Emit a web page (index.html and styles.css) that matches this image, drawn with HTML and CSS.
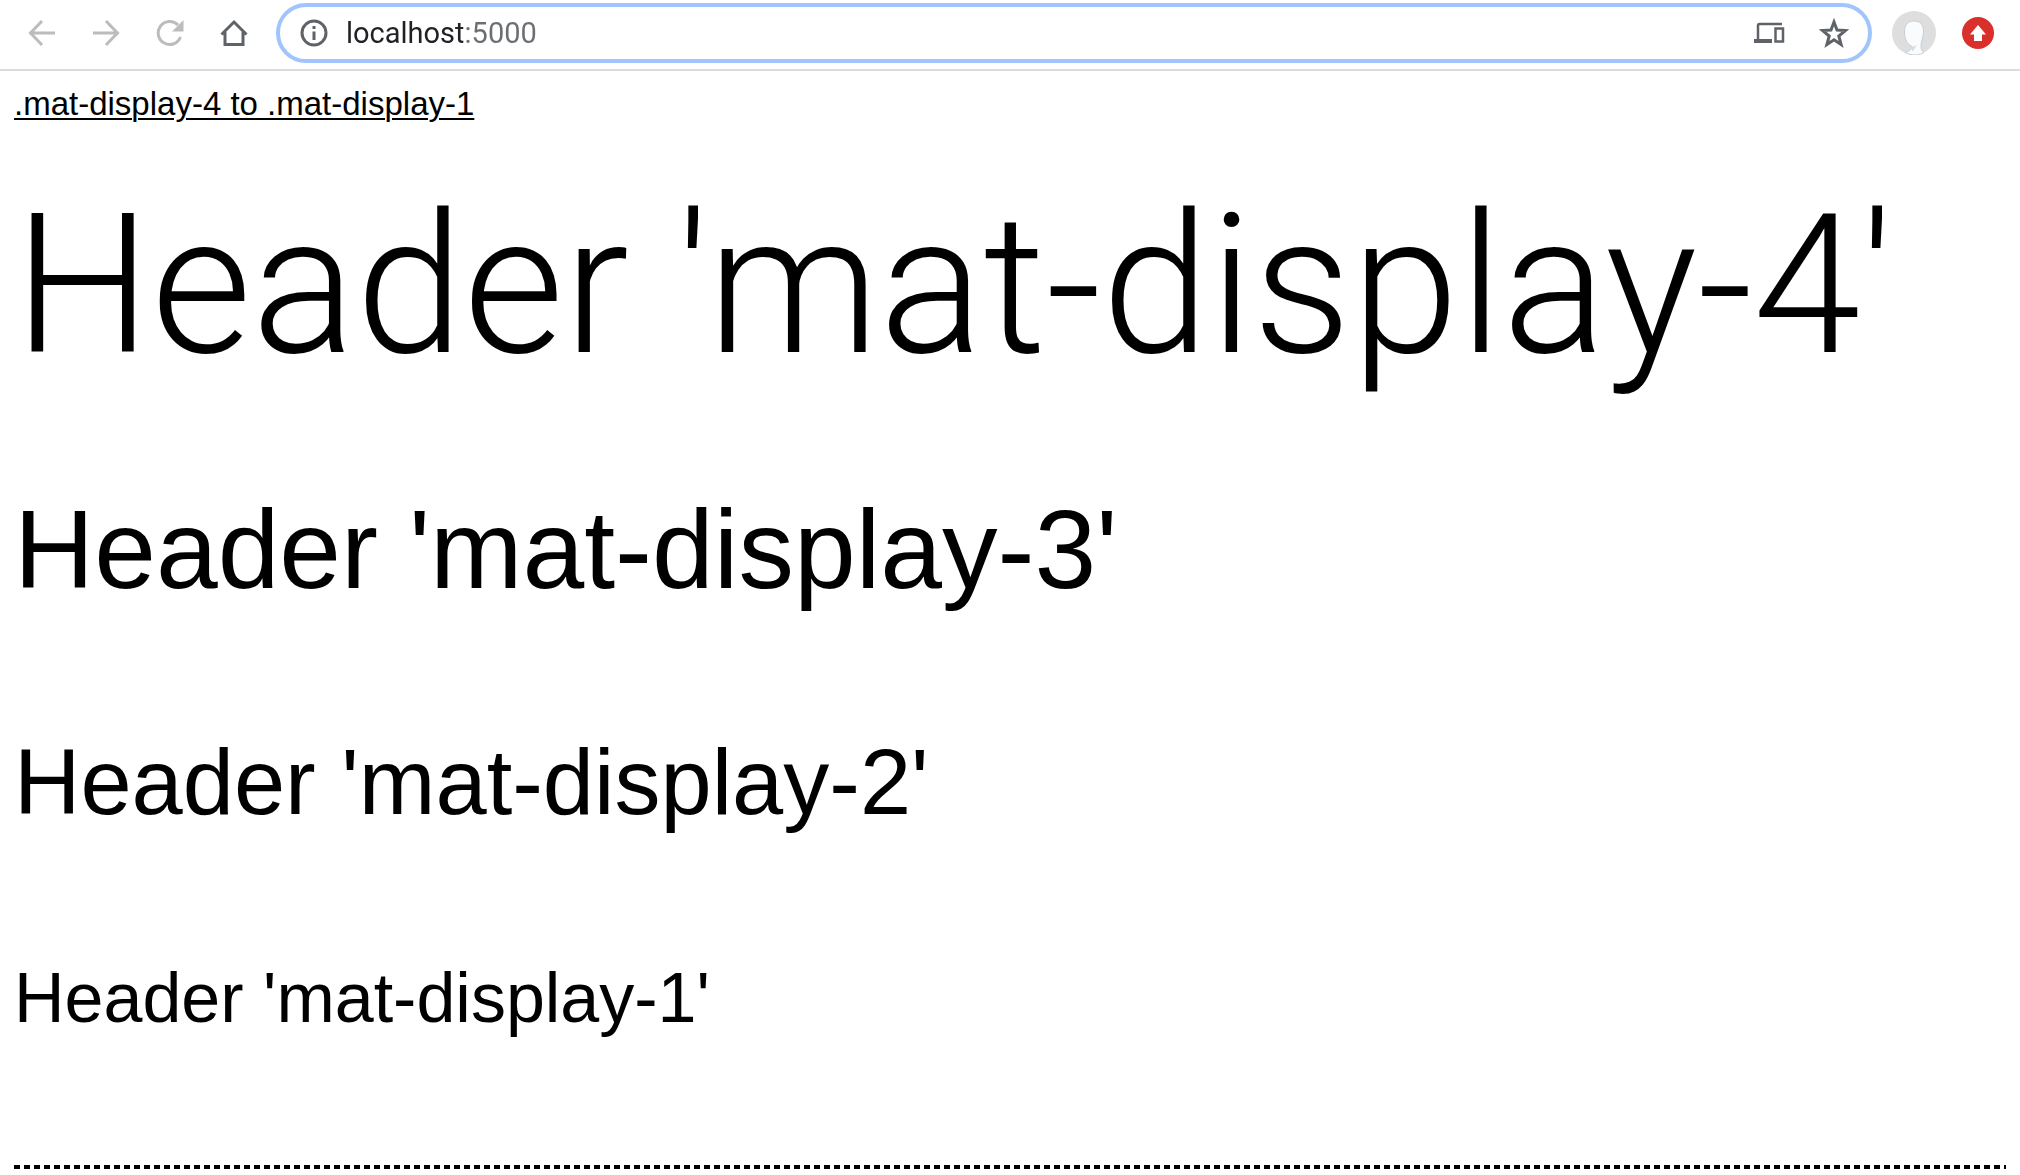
FILE: index.html
```html
<!DOCTYPE html>
<html lang="en">
<head>
  <meta charset="utf-8">
  <meta name="viewport" content="width=device-width, initial-scale=1">
  <title>Typography</title>
  <link rel="stylesheet" href="styles.css">
</head>
<body>
  <header class="toolbar">
    <nav class="nav" aria-label="Browser">
      <button class="icon-button muted" type="button" aria-label="Back">
        <svg width="28" height="28" viewBox="0 0 28 28" fill="none" stroke="currentColor" stroke-width="3"><path d="M27 14H3M14 2 2.500 14 14 26"/></svg>
      </button>
      <button class="icon-button muted" type="button" aria-label="Forward">
        <svg width="28" height="28" viewBox="0 0 28 28" fill="none" stroke="currentColor" stroke-width="3"><path d="M1 14h24M14 2l11.500 12L14 26"/></svg>
      </button>
      <button class="icon-button muted" type="button" aria-label="Reload">
        <svg width="28" height="28" viewBox="0 0 28 28" fill="none"><path d="M24.500 18A11.500 11.500 0 1 1 22 6" stroke="currentColor" stroke-width="3"/><path d="M27.500 1v11.500H16z" fill="currentColor"/></svg>
      </button>
      <button class="icon-button" type="button" aria-label="Home">
        <svg width="28" height="28" viewBox="0 0 28 28" fill="none" stroke="currentColor" stroke-width="3"><path d="M1.500 15.500 14 3l12.500 12.500M5 13v12.500h18V13"/></svg>
      </button>
    </nav>
    <form class="address">
      <svg class="info" width="28" height="28" viewBox="0 0 28 28" fill="none" stroke="currentColor" stroke-width="3" aria-hidden="true"><circle cx="14" cy="14" r="12"/><path d="M14 12.500V21M14 7v3"/></svg>
      <input class="url" type="text" aria-label="Address" value="localhost:5000">
      <button class="icon-button" type="button" aria-label="Send to your devices">
        <svg width="32" height="28" viewBox="0 0 32 28" fill="none" stroke="currentColor"><path d="M29 5H6.500Q5 5 5 6.500V21" stroke-width="2.500"/><path d="M1 22h18" stroke-width="4"/><rect x="22.500" y="9.500" width="7.500" height="13" stroke-width="2.500"/></svg>
      </button>
      <button class="icon-button" type="button" aria-label="Bookmark">
        <svg width="30" height="30" viewBox="0 0 30 30" fill="none" stroke="currentColor" stroke-width="3"><path d="M15 4l3 8 8.500.500-6.700 5.500 2.300 8.500-7.100-4.700-7.100 4.700 2.300-8.500L3.500 12.500 12 12z"/></svg>
      </button>
    </form>
    <button class="icon-button" type="button" aria-label="Profile">
      <svg width="44" height="44" viewBox="0 0 44 44"><circle cx="22" cy="22" r="22" fill="#dedede"/><path d="M13 41.500c4-1 7-3 6.500-6.500-5-2-7-8-7-14 0-7 3-11 9.500-11s9.500 4 9.500 10c0 6-2.500 10-2.500 15 0 3.500 1 5.500 3 6.500-5 3-13 3.500-19 0z" fill="#fafbfc" stroke="#c3d0da"/><path d="M19.500 35c2 1 3.500.500 5.500-1.500-2 3-2.500 5-5 7z" fill="#d3dde4"/></svg>
    </button>
    <button class="icon-button" type="button" aria-label="Update">
      <svg width="32" height="32" viewBox="0 0 32 32"><circle cx="16" cy="16" r="16" fill="#d9302c"/><path d="M16 8l8 9.500h-4V24h-8v-6.500H8z" fill="#fff"/></svg>
    </button>
  </header>
  <main class="page">
    <p class="caption">.mat-display-4 to .mat-display-1</p>
    <h1 class="mat-display-4">Header 'mat-display-4'</h1>
    <h1 class="mat-display-3">Header 'mat-display-3'</h1>
    <h1 class="mat-display-2">Header 'mat-display-2'</h1>
    <h1 class="mat-display-1">Header 'mat-display-1'</h1>
    <hr class="divider">
  </main>
</body>
</html>
```
FILE: styles.css
```css
* {
  box-sizing: border-box;
}

body {
  margin: 0;
  background: #fff;
  color: #000;
  font-family: "Liberation Sans", Arial, sans-serif;
}

.toolbar {
  display: flex;
  align-items: center;
  gap: 26px;
  padding: 3px 26px 6px 28px;
  border-bottom: 2px solid #dadce0;
}

.nav {
  display: flex;
  gap: 36px;
  margin-right: 2px;
}

.icon-button {
  display: flex;
  flex: none;
  padding: 0;
  border: 0;
  background: none;
  color: #5f6368;
}

.muted {
  color: #babcbe;
}

.address {
  display: flex;
  flex: 1;
  align-items: center;
  gap: 34px;
  height: 60px;
  min-width: 0;
  margin-right: -6px;
  padding: 0 19px 0 20px;
  border: 4px solid #a1c4fc;
  border-radius: 30px;
  color: #5f6368;
}

.info {
  flex: none;
  margin-right: -16px;
}

.url {
  flex: 1;
  min-width: 0;
  padding: 0;
  border: 0;
  outline: 0;
  background: linear-gradient(90deg, #202124 117px, #6b6e72 117px);
  background-clip: text;
  color: transparent;
  font: 29px/36px Roboto, sans-serif;
}

.page {
  padding: 13px 14px 0;
}

.caption {
  margin: 0 0 50px;
  font-size: 33px;
  line-height: 40px;
  text-decoration: underline;
  text-decoration-thickness: 2px;
  text-underline-offset: 3px;
}

.mat-display-4,
.mat-display-3,
.mat-display-2,
.mat-display-1 {
  margin: 0 0 128px;
  font-weight: 400;
  white-space: nowrap;
}

.mat-display-4 {
  margin-bottom: 96px;
  font: 300 194px/224px Roboto, sans-serif;
}

.mat-display-3 {
  font-size: 111px;
  line-height: 112px;
}

.mat-display-2 {
  font-size: 92px;
  line-height: 96px;
}

.mat-display-1 {
  margin-bottom: 127px;
  font-size: 70px;
  line-height: 80px;
}

.divider {
  height: 4px;
  margin: 0;
  border: 0;
  background: repeating-linear-gradient(90deg, #000 0 6px, transparent 6px 10px);
}
```
